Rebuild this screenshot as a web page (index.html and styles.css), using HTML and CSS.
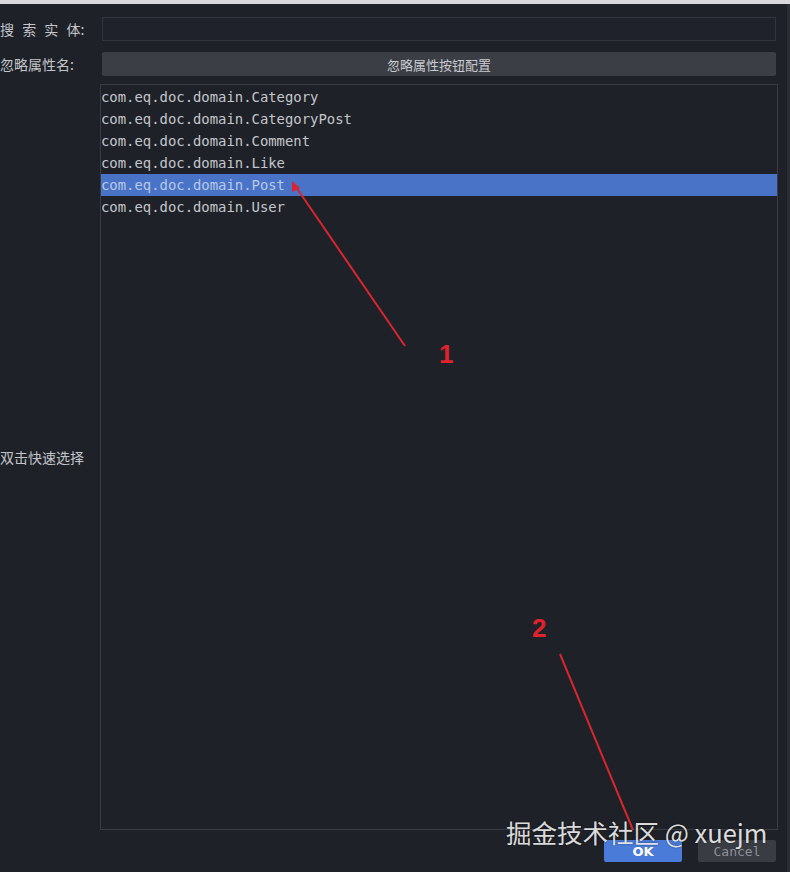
FILE: index.html
```html
<!DOCTYPE html>
<html lang="zh">
<head>
<meta charset="utf-8">
<title>选择实体</title>
<link rel="stylesheet" href="styles.css">
</head>
<body>
<div class="topbar"></div>
<div class="dialog">
  <div class="row r-search">
    <div class="label spaced">搜 索 实 体:</div>
    <div class="field"><input class="search" type="text"></div>
  </div>
  <div class="row r-config">
    <div class="label">忽略属性名:</div>
    <div class="field"><button class="config">忽略属性按钮配置</button></div>
  </div>
  <div class="row r-list">
    <div class="label">双击快速选择</div>
    <div class="list">
      <div class="item">com.eq.doc.domain.Category</div>
      <div class="item">com.eq.doc.domain.CategoryPost</div>
      <div class="item">com.eq.doc.domain.Comment</div>
      <div class="item">com.eq.doc.domain.Like</div>
      <div class="item selected">com.eq.doc.domain.Post</div>
      <div class="item">com.eq.doc.domain.User</div>
    </div>
  </div>
  <div class="actions">
    <button class="btn ok">OK</button>
    <button class="btn cancel">Cancel</button>
  </div>
</div>

<svg class="annot" width="790" height="872" viewBox="0 0 790 872">
  <line x1="405" y1="346" x2="296" y2="187" stroke="#d8262e" stroke-width="2"/>
  <polygon points="292,181 292,192 300,188" fill="#d8262e"/>
  <line x1="560" y1="654" x2="633" y2="830" stroke="#d8262e" stroke-width="2"/>
</svg>
<div class="num n1">1</div>
<div class="num n2">2</div>
<div class="watermark">掘金技术社区 @ xuejm</div>
</body>
</html>
```

FILE: styles.css
```css
html, body {
  margin: 0;
  padding: 0;
  width: 790px;
  height: 872px;
  overflow: hidden;
  background: #1e2128;
}
body {
  position: relative;
  font-family: "Noto Sans CJK SC", "Noto Sans", sans-serif;
  color: #bfc2c8;
}
.topbar {
  height: 4px;
  background: #d9d9dd;
}
.dialog {
  display: flex;
  flex-direction: column;
  padding: 13px 9px 0 0;
  border-right: 3px solid #2a2d33;
  height: 868px;
  box-sizing: border-box;
}
.row {
  display: flex;
  align-items: center;
}
.r-search { height: 24px; }
.r-config { height: 24px; margin-top: 11px; }
.r-list { height: 746px; margin-top: 8px; align-items: stretch; }
.label {
  width: 100px;
  flex: none;
  font-size: 14px;
  line-height: 24px;
  color: #c3c5ca;
  white-space: nowrap;
  align-self: center;
}
.spaced { word-spacing: 5px; }
.field {
  flex: 1;
  padding: 0 2px;
}
.search {
  display: block;
  width: 100%;
  height: 24px;
  box-sizing: border-box;
  margin: 0;
  background: #1f222a;
  border: 1px solid #32353d;
  outline: none;
}
.config {
  display: block;
  width: 100%;
  height: 24px;
  margin: 0;
  border: none;
  border-radius: 2px;
  background: #3b3e45;
  color: #c9cbd0;
  font-family: "Noto Sans CJK SC", sans-serif;
  font-size: 13px;
  padding: 0;
}
.list {
  flex: 1;
  border: 1px solid #393c43;
  background: #1e2128;
  padding-top: 1px;
  box-sizing: border-box;
}
.item {
  height: 22px;
  line-height: 22px;
  font-family: "DejaVu Sans Mono", monospace;
  font-size: 13.9px;
  color: #c4c6cb;
  white-space: nowrap;
}
.item.selected {
  background: #4873c6;
  color: #b9c8e6;
}
.actions {
  display: flex;
  justify-content: flex-end;
  gap: 16px;
  margin-top: 10px;
  padding-right: 2px;
}
.btn {
  width: 78px;
  height: 22px;
  border: none;
  border-radius: 2px;
  margin: 0;
  padding: 0;
}
.ok {
  background: #4a7bd9;
  color: #ffffff;
  font-family: "DejaVu Sans", sans-serif;
  font-weight: bold;
  font-size: 13px;
}
.cancel {
  background: #393c43;
  color: #8d9097;
  font-family: "DejaVu Sans Mono", monospace;
  font-size: 13px;
}
.annot {
  position: absolute;
  left: 0;
  top: 0;
  pointer-events: none;
}
.num {
  position: absolute;
  font-family: "Liberation Sans", sans-serif;
  font-weight: bold;
  font-size: 26px;
  line-height: 26px;
  color: #e0222c;
}
.n1 { left: 439px; top: 341px; }
.n2 { left: 532px; top: 615px; }
.watermark {
  position: absolute;
  left: 506px;
  top: 814px;
  font-family: "Noto Sans CJK SC", "Noto Sans", sans-serif;
  font-size: 25.5px;
  line-height: 36px;
  color: rgba(240, 240, 240, 0.92);
  text-shadow: 0 0 2px rgba(0, 0, 0, 0.5);
  white-space: nowrap;
}
```
